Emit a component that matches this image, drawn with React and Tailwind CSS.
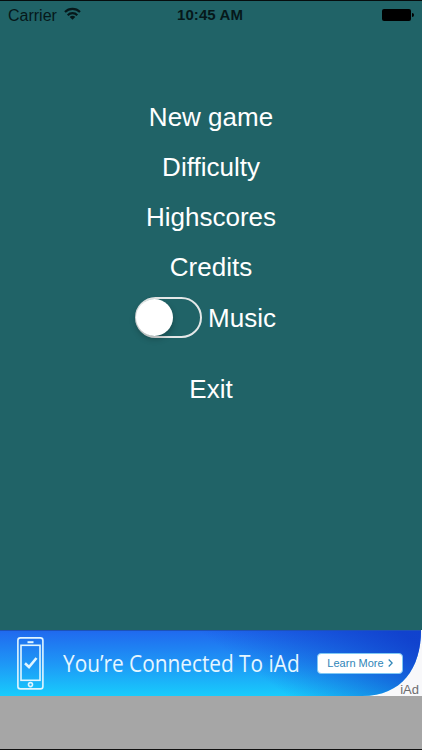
import { useState } from 'react'

const menuItems = ['New game', 'Difficulty', 'Highscores', 'Credits']

function StatusBar() {
  return (
    <div className="grid h-[29px] grid-cols-3 items-center border-t border-[#060d0e] px-2 text-[16px] leading-none text-[#06181a]">
      <div className="flex items-center gap-[7px]">
        <span className="pt-px">Carrier</span>
        <svg className="-mt-[3px] h-[13px] w-[17px]" viewBox="0 0 17 13" fill="none" stroke="currentColor" strokeWidth="2.2">
          <path d="M1 5A10.6 10.6 0 0 1 16 5" />
          <path d="M3.7 8.2A6.8 6.8 0 0 1 13.3 8.2" />
          <path d="M8.5 12.7L5.7 10A3.8 3.8 0 0 1 11.3 10Z" fill="currentColor" stroke="none" />
        </svg>
      </div>
      <span className="whitespace-nowrap pr-[2px] pb-[2px] text-center text-[15px] font-bold tracking-[0.1px]">10:45 AM</span>
      <div className="flex items-center justify-end gap-px">
        <div className="-mt-px h-3 w-[29px] rounded-[2px] bg-black" />
        <div className="-mt-px h-1 w-[2px] rounded-r-full bg-black" />
      </div>
    </div>
  )
}

function MusicToggle() {
  const [on, setOn] = useState(false)

  return (
    <div className="flex h-[50px] items-center gap-[6px] pr-[11px]">
      <button
        role="switch"
        aria-checked={on}
        aria-label="Music"
        onClick={() => setOn(!on)}
        className={`flex h-[41px] w-[67px] items-center rounded-full border-2 border-[#e4e8e8] ${on ? 'justify-end' : 'justify-start'}`}
      >
        <span className="-ml-px h-[37px] w-[37px] rounded-full bg-white shadow-[0_3px_6px_rgba(0,0,0,0.25)]" />
      </button>
      <span className="pt-[2px]">Music</span>
    </div>
  )
}

function PhoneIcon() {
  return (
    <svg className="h-[53px] w-[27px] shrink-0" viewBox="0 0 27 53" fill="none" stroke="#e0f5ff" strokeWidth="1.6">
      <rect x="0.9" y="0.9" width="25" height="51" rx="2.5" />
      <rect x="4" y="8.3" width="19" height="35" />
      <path d="M10.5 5.2H16.5" strokeWidth="2" />
      <circle cx="13.5" cy="47.6" r="2" />
      <path d="M8 26.3L12 30L19.5 21" strokeWidth="2.6" />
    </svg>
  )
}

function AdBanner() {
  return (
    <div className="relative h-[66px] overflow-hidden bg-[#f8f8fa]">
      <svg className="absolute inset-0 h-full w-full" viewBox="0 0 422 66" preserveAspectRatio="none">
        <defs>
          <linearGradient id="sky" x1="0" y1="0" x2="0" y2="1">
            <stop offset="0" stopColor="#2068ee" />
            <stop offset="0.5" stopColor="#1e96f6" />
            <stop offset="1" stopColor="#18ccfc" />
          </linearGradient>
          <linearGradient id="deep" gradientUnits="userSpaceOnUse" x1="306" y1="80" x2="376" y2="-16">
            <stop offset="0" stopColor="#1040cc" stopOpacity="0" />
            <stop offset="1" stopColor="#1040cc" stopOpacity="0.95" />
          </linearGradient>
        </defs>
        <path d="M0 0H421C421 38 402 66 362 66H0Z" fill="url(#sky)" />
        <path d="M0 0H421C421 38 402 66 362 66H0Z" fill="url(#deep)" />
        <path d="M0 0.5H421" stroke="#1c52b8" />
      </svg>
      <div className="relative flex h-full items-center pl-[17px]">
        <PhoneIcon />
        <span className="ml-[19px] w-[237px] origin-left scale-x-[0.905] whitespace-nowrap font-['Open_Sans',sans-serif] text-[23px] font-normal text-[#e6f6ff]">
          You’re Connected To iAd
        </span>
        <button className="ml-[17px] flex h-[21px] w-[86px] items-center justify-center gap-[4px] rounded-[4px] border border-[#7ec8f4] bg-white text-[11px] text-[#2f86b8]">
          Learn More
          <svg className="h-2 w-[5px]" viewBox="0 0 5 8" fill="none" stroke="currentColor" strokeWidth="1.3">
            <path d="M0.7 0.5L4.2 4L0.7 7.5" />
          </svg>
        </button>
      </div>
      <span className="absolute right-[3px] bottom-0 text-[13px] leading-none text-[#6d6d70]">iAd</span>
    </div>
  )
}

export default function App() {
  return (
    <div className="flex h-[750px] w-[422px] flex-col overflow-hidden bg-[#206367] font-['Liberation_Sans',Arial,sans-serif]">
      <StatusBar />
      <nav className="flex grow flex-col items-center pt-[63px] text-[26px] leading-none text-white">
        {menuItems.map((item) => (
          <button key={item} className="h-[50px]">{item}</button>
        ))}
        <MusicToggle />
        <button className="mt-[22px] h-[50px]">Exit</button>
      </nav>
      <AdBanner />
      <div className="h-[54px] border-b border-[#101010] bg-[#a6a6a6]" />
    </div>
  )
}
